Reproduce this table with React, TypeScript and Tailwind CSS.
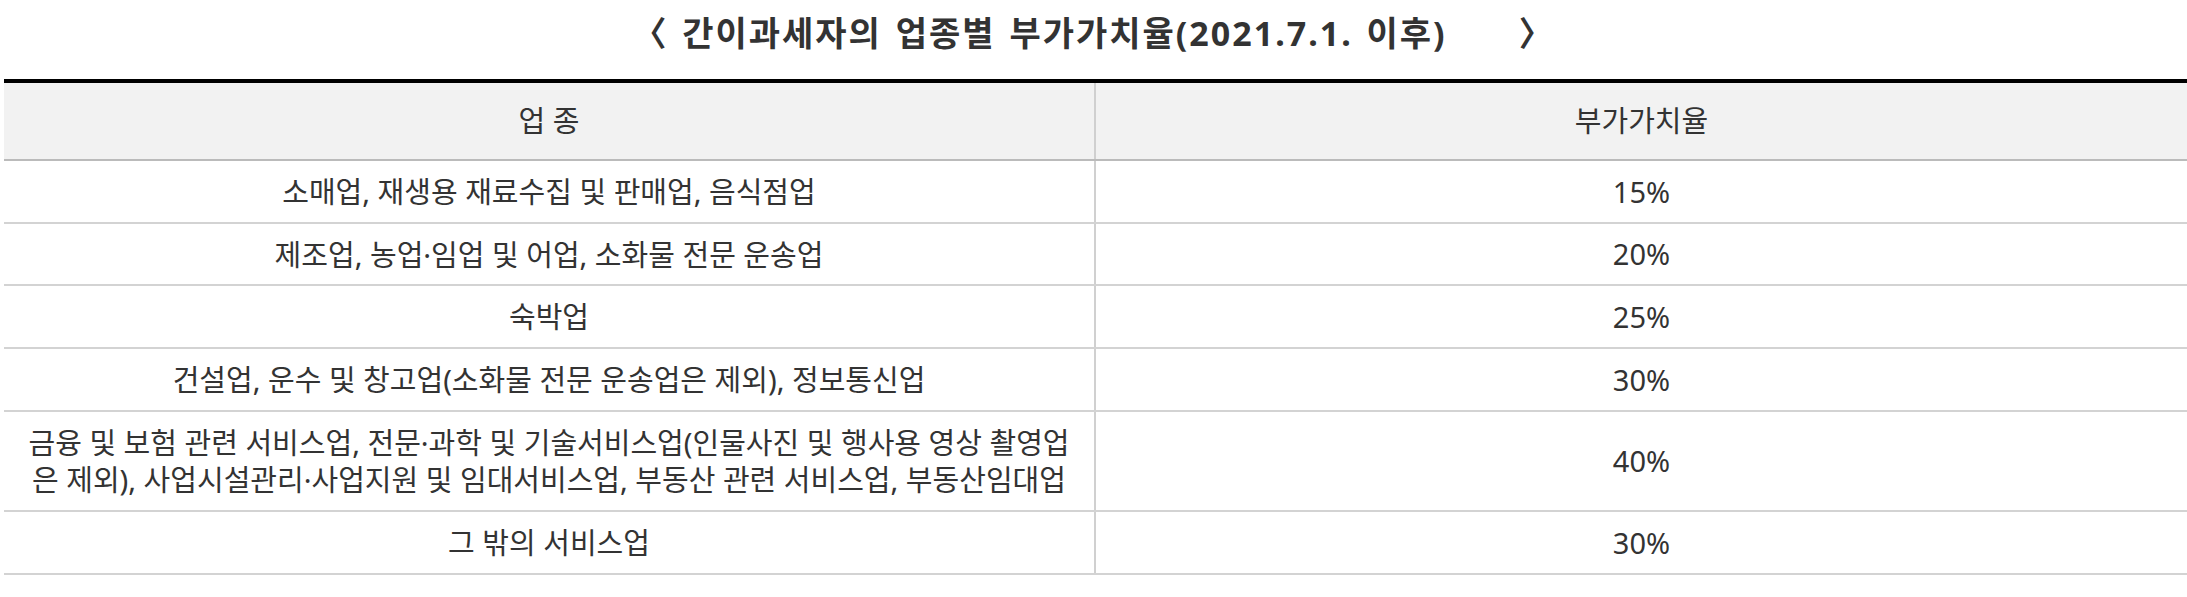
const rows = [
  { name: ["소매업, 재생용 재료수집 및 판매업, 음식점업"], rate: "15%", h: "h-[63px]" },
  { name: ["제조업, 농업·임업 및 어업, 소화물 전문 운송업"], rate: "20%", h: "h-[62px]" },
  { name: ["숙박업"], rate: "25%", h: "h-[63px]" },
  { name: ["건설업, 운수 및 창고업(소화물 전문 운송업은 제외), 정보통신업"], rate: "30%", h: "h-[63px]" },
  {
    name: [
      "금융 및 보험 관련 서비스업, 전문·과학 및 기술서비스업(인물사진 및 행사용 영상 촬영업",
      "은 제외), 사업시설관리·사업지원 및 임대서비스업, 부동산 관련 서비스업, 부동산임대업",
    ],
    rate: "40%",
    h: "h-[100px]",
  },
  { name: ["그 밖의 서비스업"], rate: "30%", h: "h-[63px]" },
];

export default function App() {
  return (
    <div className="w-[2187px] h-[597px] bg-white text-[#333] font-['Noto_Sans','Noto_Sans_CJK_KR',sans-serif]">
      <h2 className="h-[79px] pt-[9px] flex justify-center text-[34px] leading-[48px] font-bold text-[#333] tracking-[2px] [word-spacing:3px]">
        <span>〈 간이과세자의 업종별 부가가치율(2021.7.1. 이후)</span>
        <span className="ml-[72px]">〉</span>
      </h2>

      <div className="ml-[4px] border-t-4 border-black">
        <div className="grid grid-cols-[1092px_1fr] h-[78px] bg-[#f2f2f2] border-b-2 border-[#bbbbbb] text-[29px]">
          <div className="flex items-center justify-center border-r-2 border-[#d0d0d0]">업 종</div>
          <div className="flex items-center justify-center">부가가치율</div>
        </div>

        {rows.map((row, i) => (
          <div
            key={i}
            className={`grid grid-cols-[1092px_1fr] ${row.h} border-b-2 border-[#d3d3d3] text-[29px]`}
          >
            <div className="flex flex-col items-center justify-center px-6 leading-[37px] text-center border-r-2 border-[#d0d0d0] whitespace-nowrap">
              {row.name.map((line, j) => (
                <span key={j}>{line}</span>
              ))}
            </div>
            <div className="flex items-center justify-center">{row.rate}</div>
          </div>
        ))}
      </div>
    </div>
  );
}
